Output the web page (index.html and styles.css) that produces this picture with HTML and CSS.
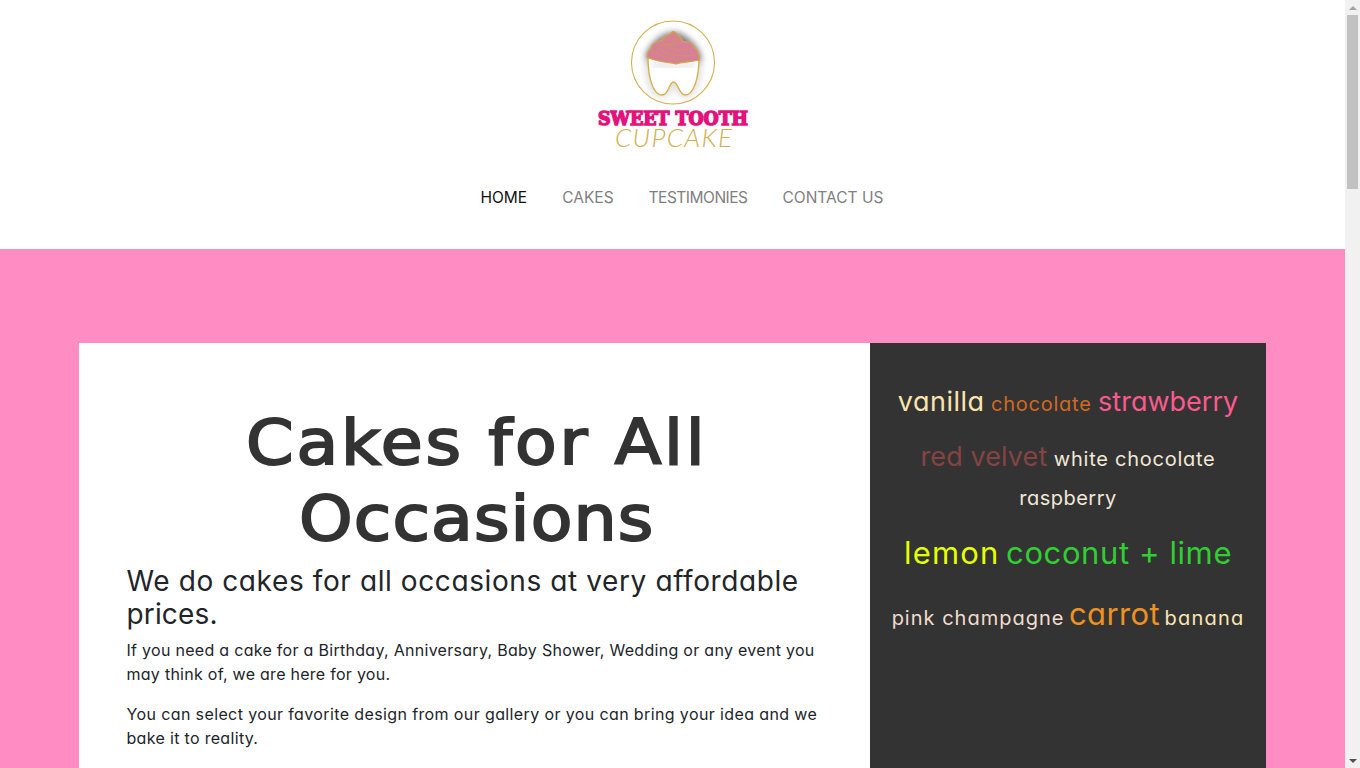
FILE: index.html
```html
<!DOCTYPE html>
<html lang="en">
<head>
<meta charset="utf-8">
<title>Sweet Tooth Cupcake</title>
<link rel="stylesheet" href="styles.css">
</head>
<body>
<div class="page">
  <header class="header">
    <svg class="logo" viewBox="590 10 170 150" width="170" height="150" role="img" aria-label="Sweet Tooth Cupcake">
      <defs>
        <filter id="soft" x="-50%" y="-50%" width="200%" height="200%"><feGaussianBlur stdDeviation="3"/></filter>
      </defs>
      <circle cx="673" cy="62.500" r="41.500" fill="#fff" stroke="#d5b04f" stroke-width="1.100"/>
      <path d="M648 57C648 77 652 94 662 94C669 94 669 81 673.500 81C678 81 678 94 685 94C694 94 699 77 699 57" fill="none" stroke="#777" stroke-width="7" opacity=".25" filter="url(#soft)"/>
      <path d="M646 57C649 46 661 33 674 33C684 33 701 48 700 59C686 65 658 64 646 57Z" fill="#222" stroke="#333" stroke-width="2" opacity=".6" filter="url(#soft)"/>
      <path d="M648 58C648 77 653 95 662 95C669 95 669 82 673.500 82C678 82 679 95 685 95C694 95 699 77 699 58Z" fill="#fff" stroke="#d8b04a" stroke-width="1.400"/>
      <path d="M652 64C662 67 685 68 695 64" fill="none" stroke="#777" stroke-width="4" opacity=".25" filter="url(#soft)"/>
      <path d="M647 57C647 53 648 51 651 49C651 44 655 42 662 40C663 36 669 36 673 31.500C676 31.500 676 34 679 36C682 38 682 40 683 41.500C688 42 691 42 692 44C693 46 694 48 697 50C699 53 699 56 699.500 60C690 62 682 62 676 64C668 62 656 62 647 57Z" fill="#d77f98" stroke="#d6a34b" stroke-width="1.200"/>
      <path d="M650 50C659 57 677 60 690 61M654 44C662 53 679 59 698 54M658 42C666 50 682 53 694 47M663 41C663 46 674 47 683 42M664 44C674 46 677 39 673 32M670 45C679 43 681 39 678 36M666 42C667 37 671 38 673 34" fill="none" stroke="#cf9850" stroke-width=".8"/>
      <text class="logo-name" x="598" y="124.500" textLength="150" lengthAdjust="spacingAndGlyphs">SWEET TOOTH</text>
      <text class="logo-sub" x="615" y="147" textLength="117" lengthAdjust="spacing">CUPCAKE</text>
    </svg>
    <nav class="nav">
      <a class="active">HOME</a><a>CAKES</a><a class="testimonies">TESTIMONIES</a><a>CONTACT US</a>
    </nav>
  </header>
  <main class="band">
    <section class="intro">
      <h1><span class="t1">Cakes for All</span><br><span class="t2">Occasions</span></h1>
      <h2><span class="s1">We do cakes for all occasions at very affordable</span><br><span class="s2">prices.</span></h2>
      <p><span class="p1">If you need a cake for a Birthday, Anniversary, Baby Shower, Wedding or any event you</span><br><span class="p2">may think of, we are here for you.</span></p>
      <p><span class="p3">You can select your favorite design from our gallery or you can bring your idea and we</span><br><span class="p4">bake it to reality.</span></p>
    </section>
    <aside class="flavors">
      <div class="row r1"><span class="vanilla">vanilla</span><span class="chocolate">chocolate</span><span class="strawberry">strawberry</span></div>
      <div class="row r2"><span class="velvet">red velvet</span><span class="white">white chocolate</span></div>
      <div class="row r3"><span class="white rasp">raspberry</span></div>
      <div class="row r4"><span class="lemon">lemon</span><span class="lime">coconut + lime</span></div>
      <div class="row r5"><span class="pink">pink champagne</span><span class="carrot">carrot</span><span class="banana">banana</span></div>
    </aside>
  </main>
</div>
<div class="scrollbar"><i class="up"></i><div class="thumb"></div><i class="down"></i></div>
</body>
</html>
```
FILE: styles.css
```css
* { box-sizing: border-box; }
body { margin: 0; height: 768px; display: flex; overflow: hidden; background: #fff; color: #212529; font-family: Inter, "Open Sans", sans-serif; font-feature-settings: "cv11"; }
.page { width: 1345px; height: 768px; overflow: hidden; }
.header { height: 249px; padding-top: 10px; }
.logo { display: block; margin-left: 590px; }
.logo-name { font: bold 18px "DejaVu Serif", serif; fill: #e3127c; stroke: #e3127c; stroke-width: 1.5px; }
.logo-sub { font: italic 300 26px Lato, sans-serif; fill: #d0ae4e; }
.nav { display: flex; gap: 35px; padding: 26px 0 0 480.5px; font-size: 15.5px; line-height: 24px; color: #808080; }
.active { color: #111; }
.testimonies { letter-spacing: -.5px; }
.band { display: flex; height: 519px; padding: 94px 79px 0; background: #ff8dc4; }
.intro { width: 791px; padding: 62px 0 0 47.5px; background: #fff; white-space: nowrap; }
h1 { margin: 0 44px 0 0; text-align: center; color: #333; font: 400 62px/76px "DejaVu Sans", sans-serif; -webkit-text-stroke: 2px #333; transform: scaleX(1.1); }
.t1 { letter-spacing: 2.5px; }
.t2 { letter-spacing: 1px; }
h2 { margin: 8px 0 7px; font-size: 28px; font-weight: 400; line-height: 33px; }
.s1 { letter-spacing: .6px; }
.s2 { letter-spacing: .15px; }
p { margin: 0 0 16px; font-size: 16px; line-height: 24px; }
.p1 { letter-spacing: .29px; }
.p2 { letter-spacing: .27px; }
.p3 { letter-spacing: .38px; }
.p4 { letter-spacing: .32px; }
.flavors { width: 396px; padding-top: 45px; background: #333; font-size: 20px; line-height: 1; white-space: nowrap; }
.row { display: flex; justify-content: center; align-items: baseline; gap: 6.5px; }
.r1 { height: 55px; }
.r2 { height: 45px; }
.r3 { height: 49px; }
.r4 { height: 61px; }
.r5 { gap: 4.5px; }
.vanilla { color: #f9e5ac; font-size: 27px; letter-spacing: .5px; }
.chocolate { color: #d2691e; letter-spacing: .75px; }
.strawberry { color: #fc5a8d; font-size: 27px; }
.velvet { color: #854442; font-size: 27px; letter-spacing: .1px; }
.white { color: #f1e8d8; letter-spacing: .75px; }
.rasp { letter-spacing: .5px; }
.lemon { color: #e3ff00; font-size: 31px; letter-spacing: 1.2px; }
.lime { color: #32cd32; font-size: 31px; letter-spacing: .6px; }
.pink { color: #f1ddcf; letter-spacing: 1px; }
.carrot { color: #ed9121; font-size: 31px; letter-spacing: .4px; }
.banana { color: #fae7b5; letter-spacing: 1.2px; }
.scrollbar { width: 15px; height: 768px; padding: 6px 0 5px; background: #f1f1f1; display: flex; flex-direction: column; align-items: center; }
.up { border: 4px solid transparent; border-top: 0; border-bottom-color: #a3a3a3; }
.thumb { width: 11px; height: 174px; margin-top: 5px; background: #c1c1c1; }
.down { margin-top: auto; border: 4px solid transparent; border-bottom: 0; border-top-color: #505050; }
```
